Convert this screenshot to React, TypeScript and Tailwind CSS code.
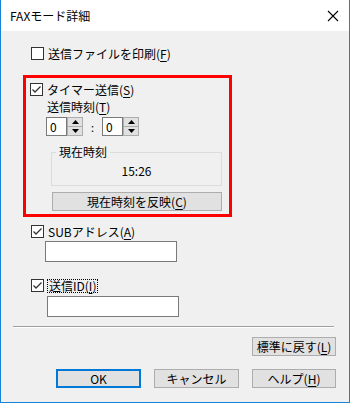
import React from "react";

const font = { fontFamily: '"Noto Sans CJK JP", "Noto Sans", sans-serif' };

function Check({ checked }: { checked?: boolean }) {
  return (
    <div className="flex h-[13px] w-[13px] shrink-0 items-center justify-center border border-[#333333] bg-white">
      {checked && (
        <svg width="11" height="11" viewBox="0 0 11 11">
          <path d="M1.5 5.5 L4 8 L9.5 2.5" fill="none" stroke="#333333" strokeWidth="1.3" />
        </svg>
      )}
    </div>
  );
}

function Key({ k }: { k: string }) {
  return (
    <>
      (<span className="underline underline-offset-2">{k}</span>)
    </>
  );
}

function Spin({ value }: { value: string }) {
  return (
    <div className="flex h-[19px]">
      <div className="flex w-[21px] items-center border border-[#7a7a7a] bg-white pl-[3px] text-[12px]">{value}</div>
      <div className="flex w-[16px] flex-col">
        <div className="flex h-[10px] items-center justify-center border border-[#adadad] bg-[#e1e1e1]">
          <svg width="7" height="4" viewBox="0 0 7 4">
            <path d="M0 4 L3.5 0 L7 4 Z" fill="#000" />
          </svg>
        </div>
        <div className="flex h-[9px] items-center justify-center border border-t-0 border-[#adadad] bg-[#e1e1e1]">
          <svg width="7" height="4" viewBox="0 0 7 4">
            <path d="M0 0 L7 0 L3.5 4 Z" fill="#000" />
          </svg>
        </div>
      </div>
    </div>
  );
}

function Btn({ children, w, primary }: { children: React.ReactNode; w: string; primary?: boolean }) {
  return (
    <div
      className={`flex h-[19px] items-center justify-center bg-[#e1e1e1] text-[12px] ${w} ${
        primary ? "border-2 border-[#0078d7]" : "border border-[#adadad]"
      }`}
    >
      {children}
    </div>
  );
}

export default function App() {
  return (
    <div className="flex h-[403px] w-[350px] flex-col bg-white text-[12px] leading-[14px] text-black" style={font}>
      {/* title bar */}
      <div className="flex h-[31px] shrink-0 items-center justify-between border-x border-[#1883d7] pl-[9px] pr-[10px]">
        <span className="text-[12px]">FAXモード詳細</span>
        <svg width="12" height="12" viewBox="0 0 12 12">
          <path d="M1 1 L11 11 M11 1 L1 11" stroke="#000" strokeWidth="1.1" />
        </svg>
      </div>

      <div className="flex flex-1 flex-col border-x border-b border-[#1883d7] bg-[#f0f0f0]">
        <div className="ml-[30px] mt-[16px] flex h-[13px] items-center gap-[4px]">
          <Check />
          <span>送信ファイルを印刷<Key k="F" /></span>
        </div>

        {/* timer section */}
        <div className="ml-[22px] mt-[15px] flex h-[142px] w-[209px] flex-col border-[3px] border-[#ff0000]">
          <div className="ml-[4px] mt-[5px] flex h-[13px] items-center gap-[4px]">
            <Check checked />
            <span>タイマー送信<Key k="S" /></span>
          </div>
          <div className="ml-[21px] mt-[4px] h-[14px]">送信時刻<Key k="T" /></div>
          <div className="ml-[20px] mt-[3px] flex items-center">
            <Spin value="0" />
            <span className="w-[19px] text-center text-[11px]">:</span>
            <Spin value="0" />
          </div>
          <div className="relative ml-[25px] mt-[16px] flex h-[34px] w-[171px] items-center justify-center border border-[#dcdcdc] pt-[3px] text-[12px]">
            <span className="absolute -top-[8px] left-[4px] bg-[#f0f0f0] px-[3px] text-[12px]">現在時刻</span>
            15:26
          </div>
          <div className="ml-[26px] mt-[6px]">
            <Btn w="w-[170px]">現在時刻を反映<Key k="C" /></Btn>
          </div>
        </div>

        <div className="ml-[30px] mt-[8px] flex h-[13px] items-center gap-[4px]">
          <Check checked />
          <span>SUBアドレス<Key k="A" /></span>
        </div>
        <div className="ml-[44px] mt-[3px] h-[21px] w-[132px] border border-[#7a7a7a] bg-white" />

        <div className="ml-[30px] mt-[17px] flex h-[13px] items-center gap-[3px]">
          <Check checked />
          <span className="border border-dotted border-black px-[1px] leading-[12px]">送信ID<Key k="I" /></span>
        </div>
        <div className="ml-[46px] mt-[4px] h-[21px] w-[132px] border border-[#7a7a7a] bg-white" />

        <div className="ml-[12px] mt-[9px] h-[2px] w-[321px] border-t border-b border-t-[#a0a0a0] border-b-white" />

        <div className="ml-[251px] mt-[9px]">
          <Btn w="w-[84px]">標準に戻す<Key k="L" /></Btn>
        </div>

        <div className="ml-[55px] mt-[13px] flex gap-[13px]">
          <Btn w="w-[85px]" primary>OK</Btn>
          <Btn w="w-[85px]">キャンセル</Btn>
          <Btn w="w-[84px]">ヘルプ<Key k="H" /></Btn>
        </div>
      </div>
    </div>
  );
}
